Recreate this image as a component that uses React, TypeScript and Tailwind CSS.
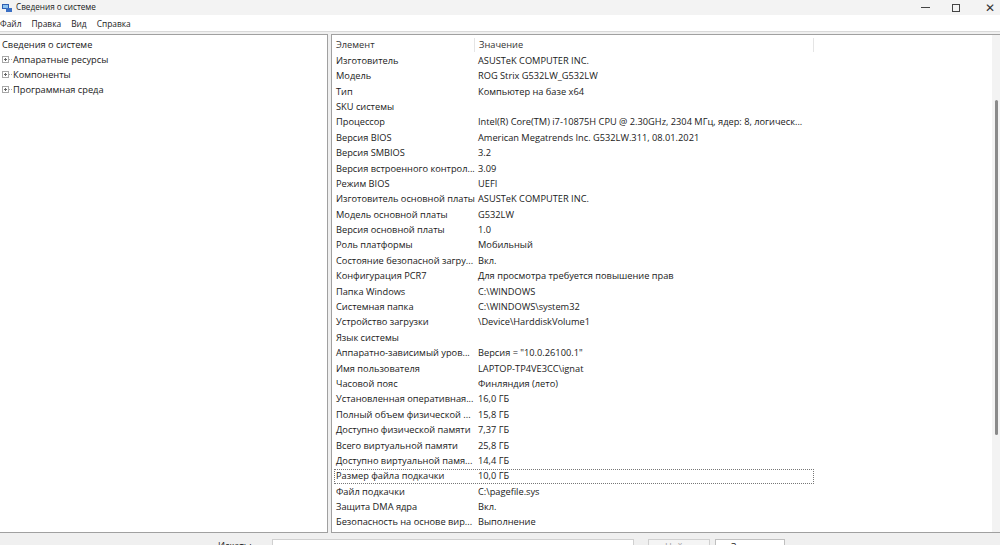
const rows: [string, string][] = [
  ["Изготовитель", "ASUSTeK COMPUTER INC."],
  ["Модель", "ROG Strix G532LW_G532LW"],
  ["Тип", "Компьютер на базе x64"],
  ["SKU системы", ""],
  ["Процессор", "Intel(R) Core(TM) i7-10875H CPU @ 2.30GHz, 2304 МГц, ядер: 8, логическ..."],
  ["Версия BIOS", "American Megatrends Inc. G532LW.311, 08.01.2021"],
  ["Версия SMBIOS", "3.2"],
  ["Версия встроенного контрол...", "3.09"],
  ["Режим BIOS", "UEFI"],
  ["Изготовитель основной платы", "ASUSTeK COMPUTER INC."],
  ["Модель основной платы", "G532LW"],
  ["Версия основной платы", "1.0"],
  ["Роль платформы", "Мобильный"],
  ["Состояние безопасной загру...", "Вкл."],
  ["Конфигурация PCR7", "Для просмотра требуется повышение прав"],
  ["Папка Windows", "C:\\WINDOWS"],
  ["Системная папка", "C:\\WINDOWS\\system32"],
  ["Устройство загрузки", "\\Device\\HarddiskVolume1"],
  ["Язык системы", ""],
  ["Аппаратно-зависимый уров...", "Версия = \"10.0.26100.1\""],
  ["Имя пользователя", "LAPTOP-TP4VE3CC\\ignat"],
  ["Часовой пояс", "Финляндия (лето)"],
  ["Установленная оперативная...", "16,0 ГБ"],
  ["Полный объем физической ...", "15,8 ГБ"],
  ["Доступно физической памяти", "7,37 ГБ"],
  ["Всего виртуальной памяти", "25,8 ГБ"],
  ["Доступно виртуальной памя...", "14,4 ГБ"],
  ["Размер файла подкачки", "10,0 ГБ"],
  ["Файл подкачки", "C:\\pagefile.sys"],
  ["Защита DMA ядра", "Вкл."],
  ["Безопасность на основе вир...", "Выполнение"],
];

const font = { fontFamily: '"Open Sans", "Noto Sans", sans-serif' };

function AppIcon() {
  return (
    <svg width="10" height="10" viewBox="0 0 10 10">
      <rect x="0" y="1" width="7" height="5" fill="#2f5fb3" />
      <rect x="1" y="2" width="5" height="3" fill="#8fc4f0" />
      <rect x="4" y="5" width="6" height="4" fill="#3a6fc4" />
    </svg>
  );
}

function Plus() {
  return (
    <span className="inline-flex items-center mr-px">
      <span className="relative w-[7px] h-[7px] border border-[#a8a8a8] bg-white">
        <span className="absolute left-[1px] top-[2px] w-[3px] h-px bg-[#666]" />
        <span className="absolute left-[2px] top-[1px] w-px h-[3px] bg-[#666]" />
      </span>
      <span className="w-[3px] border-t border-dotted border-[#a8a8a8]" />
    </span>
  );
}

export default function App() {
  return (
    <div className="w-[1000px] h-[545px] overflow-hidden flex flex-col bg-[#f0f0f0] text-[9.25px] text-[#1a1a1a]" style={font}>
      {/* title bar */}
      <div className="h-[15px] flex items-center bg-[#f3f3f3] shrink-0">
        <div className="flex items-center gap-[4px] pl-[2px] flex-1">
          <AppIcon />
          <span className="text-[8.2px] leading-none text-[#222]">Сведения о системе</span>
        </div>
        <div className="flex items-center h-full pr-[5px]">
          <span className="w-[10px] flex justify-center"><span className="w-[9px] h-px bg-[#444]" /></span>
          <span className="w-[10px] ml-[21px] flex justify-center"><span className="w-[8px] h-[8px] border border-[#444]" /></span>
          <span className="w-[10px] ml-[24px] flex justify-center text-[#333] text-[12px] leading-none">✕</span>
        </div>
      </div>
      {/* menu */}
      <div className="h-[17px] pt-[3px] flex items-center gap-[10px] bg-white shrink-0 text-[8.4px] text-[#222] border-b border-[#d9d9d9]">
        <span>Файл</span>
        <span>Правка</span>
        <span>Вид</span>
        <span>Справка</span>
      </div>
      {/* body */}
      <div className="flex gap-[3px] pt-[2px] h-[501px] shrink-0">
        <div className="w-[328px] bg-white border border-l-0 border-[#a0a0a0] pt-[2px] pl-[2px] leading-[15px]">
          <div>Сведения о системе</div>
          <div className="flex items-center"><Plus /><span>Аппаратные ресурсы</span></div>
          <div className="flex items-center"><Plus /><span>Компоненты</span></div>
          <div className="flex items-center"><Plus /><span>Программная среда</span></div>
        </div>
        <div className="flex-1 bg-white border border-r-0 border-[#a0a0a0] flex">
          <div className="flex-1 pt-[2px] pl-[2px]">
            <div className="flex h-[16px] items-center text-[#333]">
              <span className="w-[141px] pl-[2px] border-r border-[#e5e5e5]">Элемент</span>
              <span className="w-[339px] pl-[4px] border-r border-[#e5e5e5]">Значение</span>
            </div>
            {rows.map(([k, v], i) => (
              <div
                key={i}
                className={`flex h-[15.4px] items-center w-[480px] whitespace-nowrap ${
                  k === "Размер файла подкачки" ? "border border-dotted border-[#777]" : "border border-transparent"
                }`}
              >
                <span className="w-[142px] pl-[1px] overflow-hidden">{k}</span>
                <span className="pl-[1px]">{v}</span>
              </div>
            ))}
          </div>
          <div className="w-[8px] bg-[#f3f3f3] flex justify-center pt-[65px]">
            <div className="w-[3px] h-[335px] bg-[#8a8a8a] rounded-full" />
          </div>
        </div>
      </div>
      {/* search bar */}
      <div className="flex items-start pt-[6px] text-[#222]">
        <span className="ml-[218px] w-[54px]">Искать:</span>
        <div className="w-[362px] h-[16px] bg-white border border-[#d0d0d0]" />
        <div className="ml-[14px] w-[62px] h-[16px] border border-[#d0d0d0] bg-[#f5f5f5] text-[#a0a0a0] text-center">Найти</div>
        <div className="ml-[5px] w-[70px] h-[16px] border border-[#c0c0c0] bg-white text-center">Закрыть</div>
      </div>
    </div>
  );
}
